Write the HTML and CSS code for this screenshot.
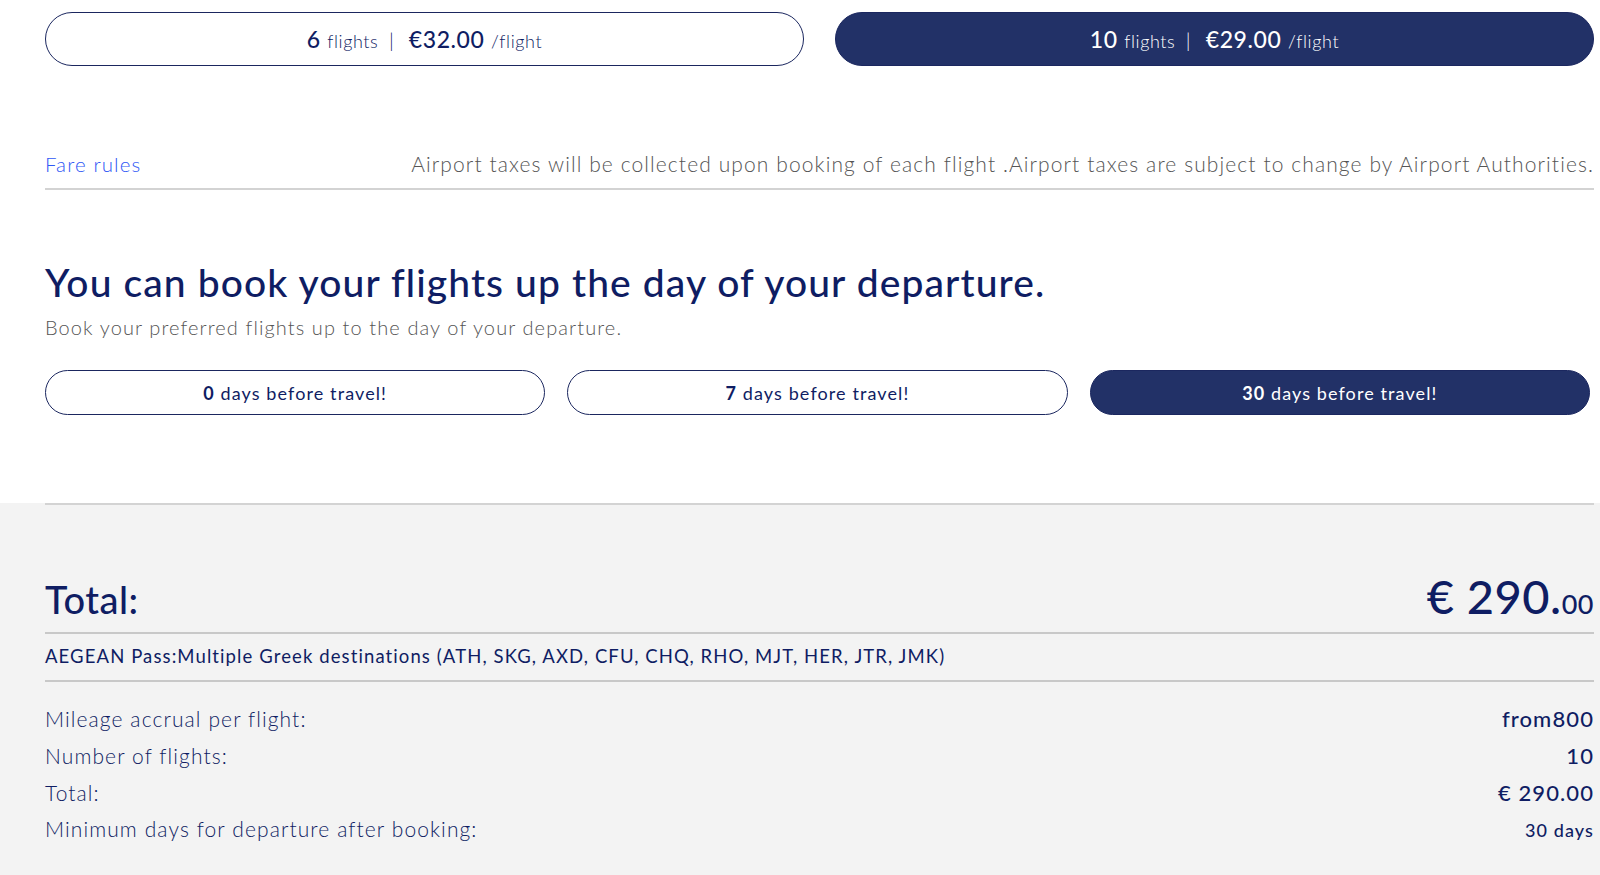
FILE: index.html
```html
<!DOCTYPE html>
<html lang="en">
<head>
  <meta charset="UTF-8">
  <meta name="viewport" content="width=device-width, initial-scale=1.0">
  <title>AEGEAN Pass</title>
  <link rel="stylesheet" href="styles.css">
</head>
<body>

  <div class="page">
    <!-- Choix du nombre de vols -->
    <div class="packs">
      <button class="pack">
        <b class="num">6</b> <span class="small">flights</span> <span class="sep">|</span>
        <b class="price">€32.00</b> <span class="small">/flight</span>
      </button>
      <button class="pack active">
        <b class="num">10</b> <span class="small">flights</span> <span class="sep">|</span>
        <b class="price">€29.00</b> <span class="small">/flight</span>
      </button>
    </div>

    <div class="rules">
      <a href="#" class="rules-link">Fare rules</a>
      <span class="rules-note">Airport taxes will be collected upon booking of each flight .Airport taxes are subject to change by Airport Authorities.</span>
    </div>

    <h2 class="title">You can book your flights up the day of your departure.</h2>
    <p class="subtitle">Book your preferred flights up to the day of your departure.</p>

    <div class="days">
      <button class="day"><b>0</b> days before travel!</button>
      <button class="day"><b>7</b> days before travel!</button>
      <button class="day active"><b>30</b> days before travel!</button>
    </div>
  </div>

  <!-- Récapitulatif -->
  <div class="summary">
    <div class="summary-inner">
      <div class="total-row">
        <span class="total-label">Total:</span>
        <span class="total-amount">€ 290.<small>00</small></span>
      </div>
      <div class="pass-name">AEGEAN Pass:Multiple Greek destinations (ATH, SKG, AXD, CFU, CHQ, RHO, MJT, HER, JTR, JMK)</div>
      <div class="details">
        <div class="detail"><span>Mileage accrual per flight:</span><b>from800</b></div>
        <div class="detail"><span>Number of flights:</span><b>10</b></div>
        <div class="detail"><span>Total:</span><b>€ 290.00</b></div>
        <div class="detail"><span>Minimum days for departure after booking:</span><b class="days-val">30 days</b></div>
      </div>
    </div>
  </div>

</body>
</html>
```

FILE: styles.css
```css
body {
  margin: 0;
  font-family: Lato, "Open Sans", sans-serif;
  letter-spacing: 1.1px;
  color: #0f1d63;
  background-color: #fff;
}
.page {
  padding: 12px 6px 0 45px;
}
button {
  font-family: inherit;
  letter-spacing: inherit;
  cursor: pointer;
}
.packs {
  display: flex;
  gap: 31px;
}
.pack {
  flex: 1;
  height: 54px;
  border: 1px solid #1b275f;
  border-radius: 27px;
  background-color: #fff;
  color: #0f1d63;
  font-size: 23px;
  letter-spacing: 0.6px;
}
.pack.active,
.day.active {
  background-color: #223167;  /* Bleu marine */
  color: #fff;
}
.pack .num,
.pack .price {
  font-weight: 500;
}
.pack .small {
  font-size: 18px;
  font-weight: 300;
}
.pack .sep {
  font-size: 20px;
  font-weight: 300;
  margin: 0 8px 0 4px;
}
.rules {
  display: flex;
  justify-content: space-between;
  align-items: baseline;
  margin-top: 85px;
  padding-bottom: 12px;
  border-bottom: 2px solid #d3d3d3;
}
.rules-link {
  color: #2f58f5;
  text-decoration: none;
  font-size: 20.5px;
  font-weight: 300;
}
.rules-note {
  color: #555;
  font-size: 21px;
  font-weight: 300;
}
.title {
  margin: 69px 0 0;
  font-size: 39px;
  font-weight: 500;
  color: #0f1d63;
}
.subtitle {
  margin: 10px 0 0;
  color: #555;
  font-size: 20px;
  font-weight: 300;
}
.days {
  display: flex;
  gap: 22px;
  margin: 31px 4px 0 0;
  padding-bottom: 88px;
}
.day {
  flex: 1;
  height: 45px;
  border: 1px solid #1b275f;
  border-radius: 23px;
  background-color: #fff;
  color: #0f1d63;
  font-size: 18px;
}
.day b {
  font-weight: 700;
}
.summary {
  background-color: #f3f3f3;
  padding: 0 6px 40px 45px;
}
.summary-inner {
  border-top: 2px solid #d3d3d3;
}
.total-row {
  display: flex;
  justify-content: space-between;
  align-items: baseline;
  padding-top: 63px;
  padding-bottom: 8px;
  border-bottom: 2px solid #c8c8c8;
}
.total-label {
  font-size: 38px;
  font-weight: 500;
  letter-spacing: 0.5px;
}
.total-amount {
  font-size: 47px;
  font-weight: 500;
  letter-spacing: 0.5px;
}
.total-amount small {
  font-size: 27px;
}
.pass-name {
  font-size: 18.5px;
  padding: 11px 0 13px;
  border-bottom: 2px solid #c8c8c8;
}
.details {
  padding-top: 23px;
}
.detail {
  display: flex;
  justify-content: space-between;
  align-items: baseline;
  height: 37px;
}
.detail span {
  font-size: 21px;
  font-weight: 300;
}
.detail b {
  font-size: 22px;
  font-weight: 500;
}
.detail b.days-val {
  font-size: 18px;
}
```
